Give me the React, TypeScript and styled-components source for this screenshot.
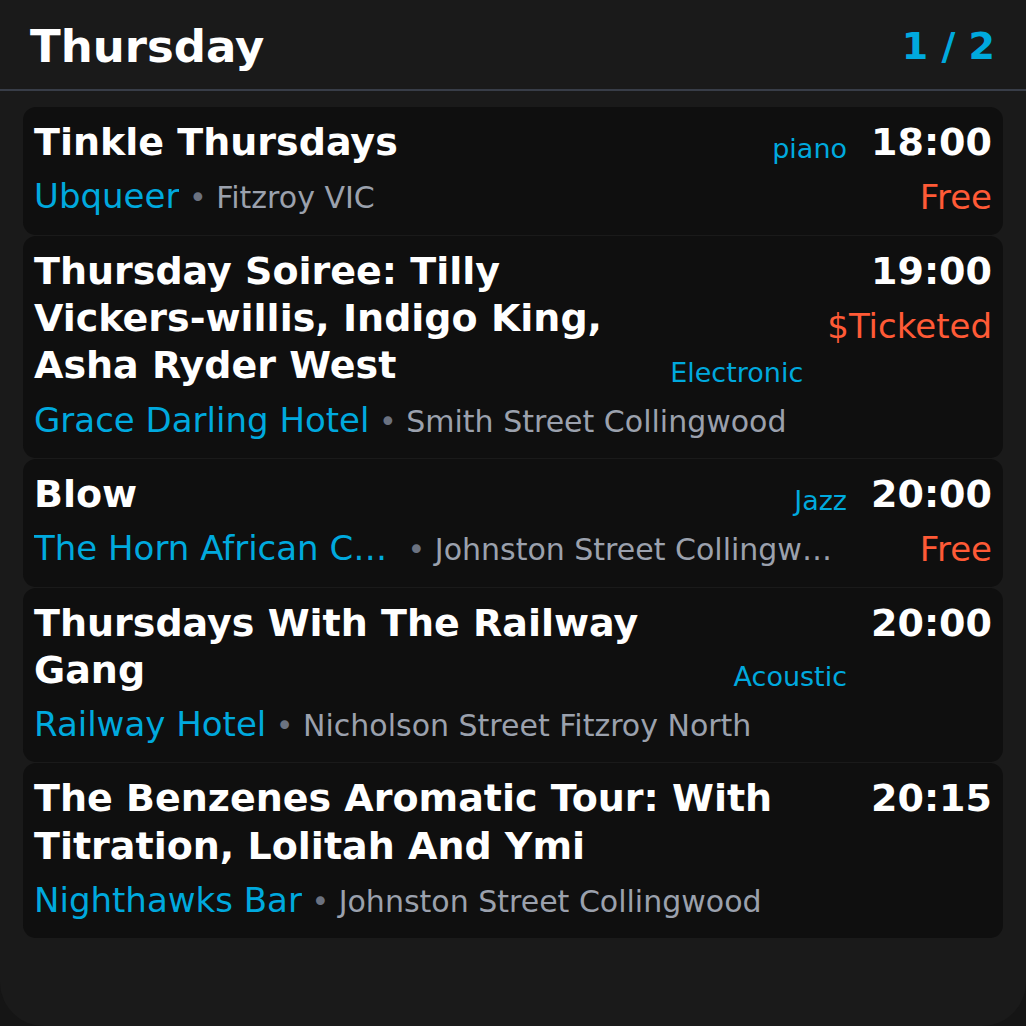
import React from "react";
import styled, { createGlobalStyle } from "styled-components";

const GlobalStyle = createGlobalStyle`
  html, body {
    margin: 0;
    padding: 0;
    background: #151515;
  }
  body {
    font-family: "DejaVu Sans", "Liberation Sans", sans-serif;
    color: #ffffff;
  }
  * { box-sizing: border-box; }
`;

const Screen = styled.div`
  width: 1026px;
  min-height: 1026px;
  background: #1a1a1a;
  border-radius: 0 0 44px 44px;
  overflow: hidden;
`;

const Header = styled.header`
  height: 91px;
  display: flex;
  align-items: center;
  justify-content: space-between;
  padding: 3px 31px 0 30px;
  border-bottom: 2px solid #383d48;
`;

const DayTitle = styled.h1`
  margin: 0;
  font-size: 45px;
  font-weight: 700;
  line-height: normal;
  color: #ffffff;
`;

const Pager = styled.div`
  font-size: 38px;
  font-weight: 700;
  color: #00a9de;
`;

const List = styled.div`
  display: flex;
  flex-direction: column;
  gap: 1px;
  padding: 16px 23px 0;
`;

const Card = styled.article`
  display: flex;
  gap: 24px;
  background: #0f0f0f;
  border-radius: 13px;
  padding: 12px 11px 17px 11px;
`;

const Main = styled.div`
  flex: 1 1 auto;
  min-width: 0;
  display: flex;
  flex-direction: column;
  gap: 9px;
`;

const TopRow = styled.div`
  display: flex;
  align-items: flex-end;
  gap: 16px;
`;

const Title = styled.div`
  flex: 1 1 auto;
  min-width: 0;
  font-size: 38px;
  font-weight: 700;
  line-height: 1.24;
  color: #ffffff;
`;

const Genre = styled.div`
  flex: 0 0 auto;
  font-size: 27px;
  line-height: 1.3;
  color: #00a9de;
`;

const VenueLine = styled.div`
  display: flex;
  align-items: baseline;
  white-space: nowrap;
  line-height: 1.24;
  min-width: 0;
`;

const Venue = styled.span`
  flex: 0 0 auto;
  max-width: 364px;
  overflow: hidden;
  text-overflow: ellipsis;
  font-size: 34px;
  color: #00a9de;
`;

const Address = styled.span`
  flex: 0 1 auto;
  min-width: 0;
  overflow: hidden;
  text-overflow: ellipsis;
  padding-left: 0.318em;
  font-size: 30px;
  color: #9ba1ad;
`;

const Dot = styled.span`
  color: #6b7280;
`;

const Side = styled.div`
  flex: 0 0 auto;
  display: flex;
  flex-direction: column;
  align-items: flex-end;
  gap: 10px;
`;

const Time = styled.div`
  font-size: 38px;
  font-weight: 700;
  line-height: 1.24;
  color: #ffffff;
`;

const Price = styled.div`
  font-size: 34px;
  line-height: 1.24;
  color: #ff5a36;
`;

type Gig = {
  title: string;
  genre?: string;
  time: string;
  price?: string;
  venue: string;
  address: string;
};

const gigs: Gig[] = [
  {
    title: "Tinkle Thursdays",
    genre: "piano",
    time: "18:00",
    price: "Free",
    venue: "Ubqueer",
    address: "Fitzroy VIC",
  },
  {
    title: "Thursday Soiree: Tilly Vickers-willis, Indigo King, Asha Ryder West",
    genre: "Electronic",
    time: "19:00",
    price: "$Ticketed",
    venue: "Grace Darling Hotel",
    address: "Smith Street Collingwood",
  },
  {
    title: "Blow",
    genre: "Jazz",
    time: "20:00",
    price: "Free",
    venue: "The Horn African Cafe",
    address: "Johnston Street Collingwood",
  },
  {
    title: "Thursdays With The Railway Gang",
    genre: "Acoustic",
    time: "20:00",
    venue: "Railway Hotel",
    address: "Nicholson Street Fitzroy North",
  },
  {
    title: "The Benzenes Aromatic Tour: With Titration, Lolitah And Ymi",
    time: "20:15",
    venue: "Nighthawks Bar",
    address: "Johnston Street Collingwood",
  },
];

function GigCard({ gig }: { gig: Gig }) {
  return (
    <Card>
      <Main>
        <TopRow>
          <Title>{gig.title}</Title>
          {gig.genre && <Genre>{gig.genre}</Genre>}
        </TopRow>
        <VenueLine>
          <Venue>{gig.venue}</Venue>
          <Address>
            <Dot>•</Dot> {gig.address}
          </Address>
        </VenueLine>
      </Main>
      <Side>
        <Time>{gig.time}</Time>
        {gig.price && <Price>{gig.price}</Price>}
      </Side>
    </Card>
  );
}

export default function App() {
  return (
    <>
      <GlobalStyle />
      <Screen>
        <Header>
          <DayTitle>Thursday</DayTitle>
          <Pager>1 / 2</Pager>
        </Header>
        <List>
          {gigs.map((g, i) => (
            <GigCard key={i} gig={g} />
          ))}
        </List>
      </Screen>
    </>
  );
}
